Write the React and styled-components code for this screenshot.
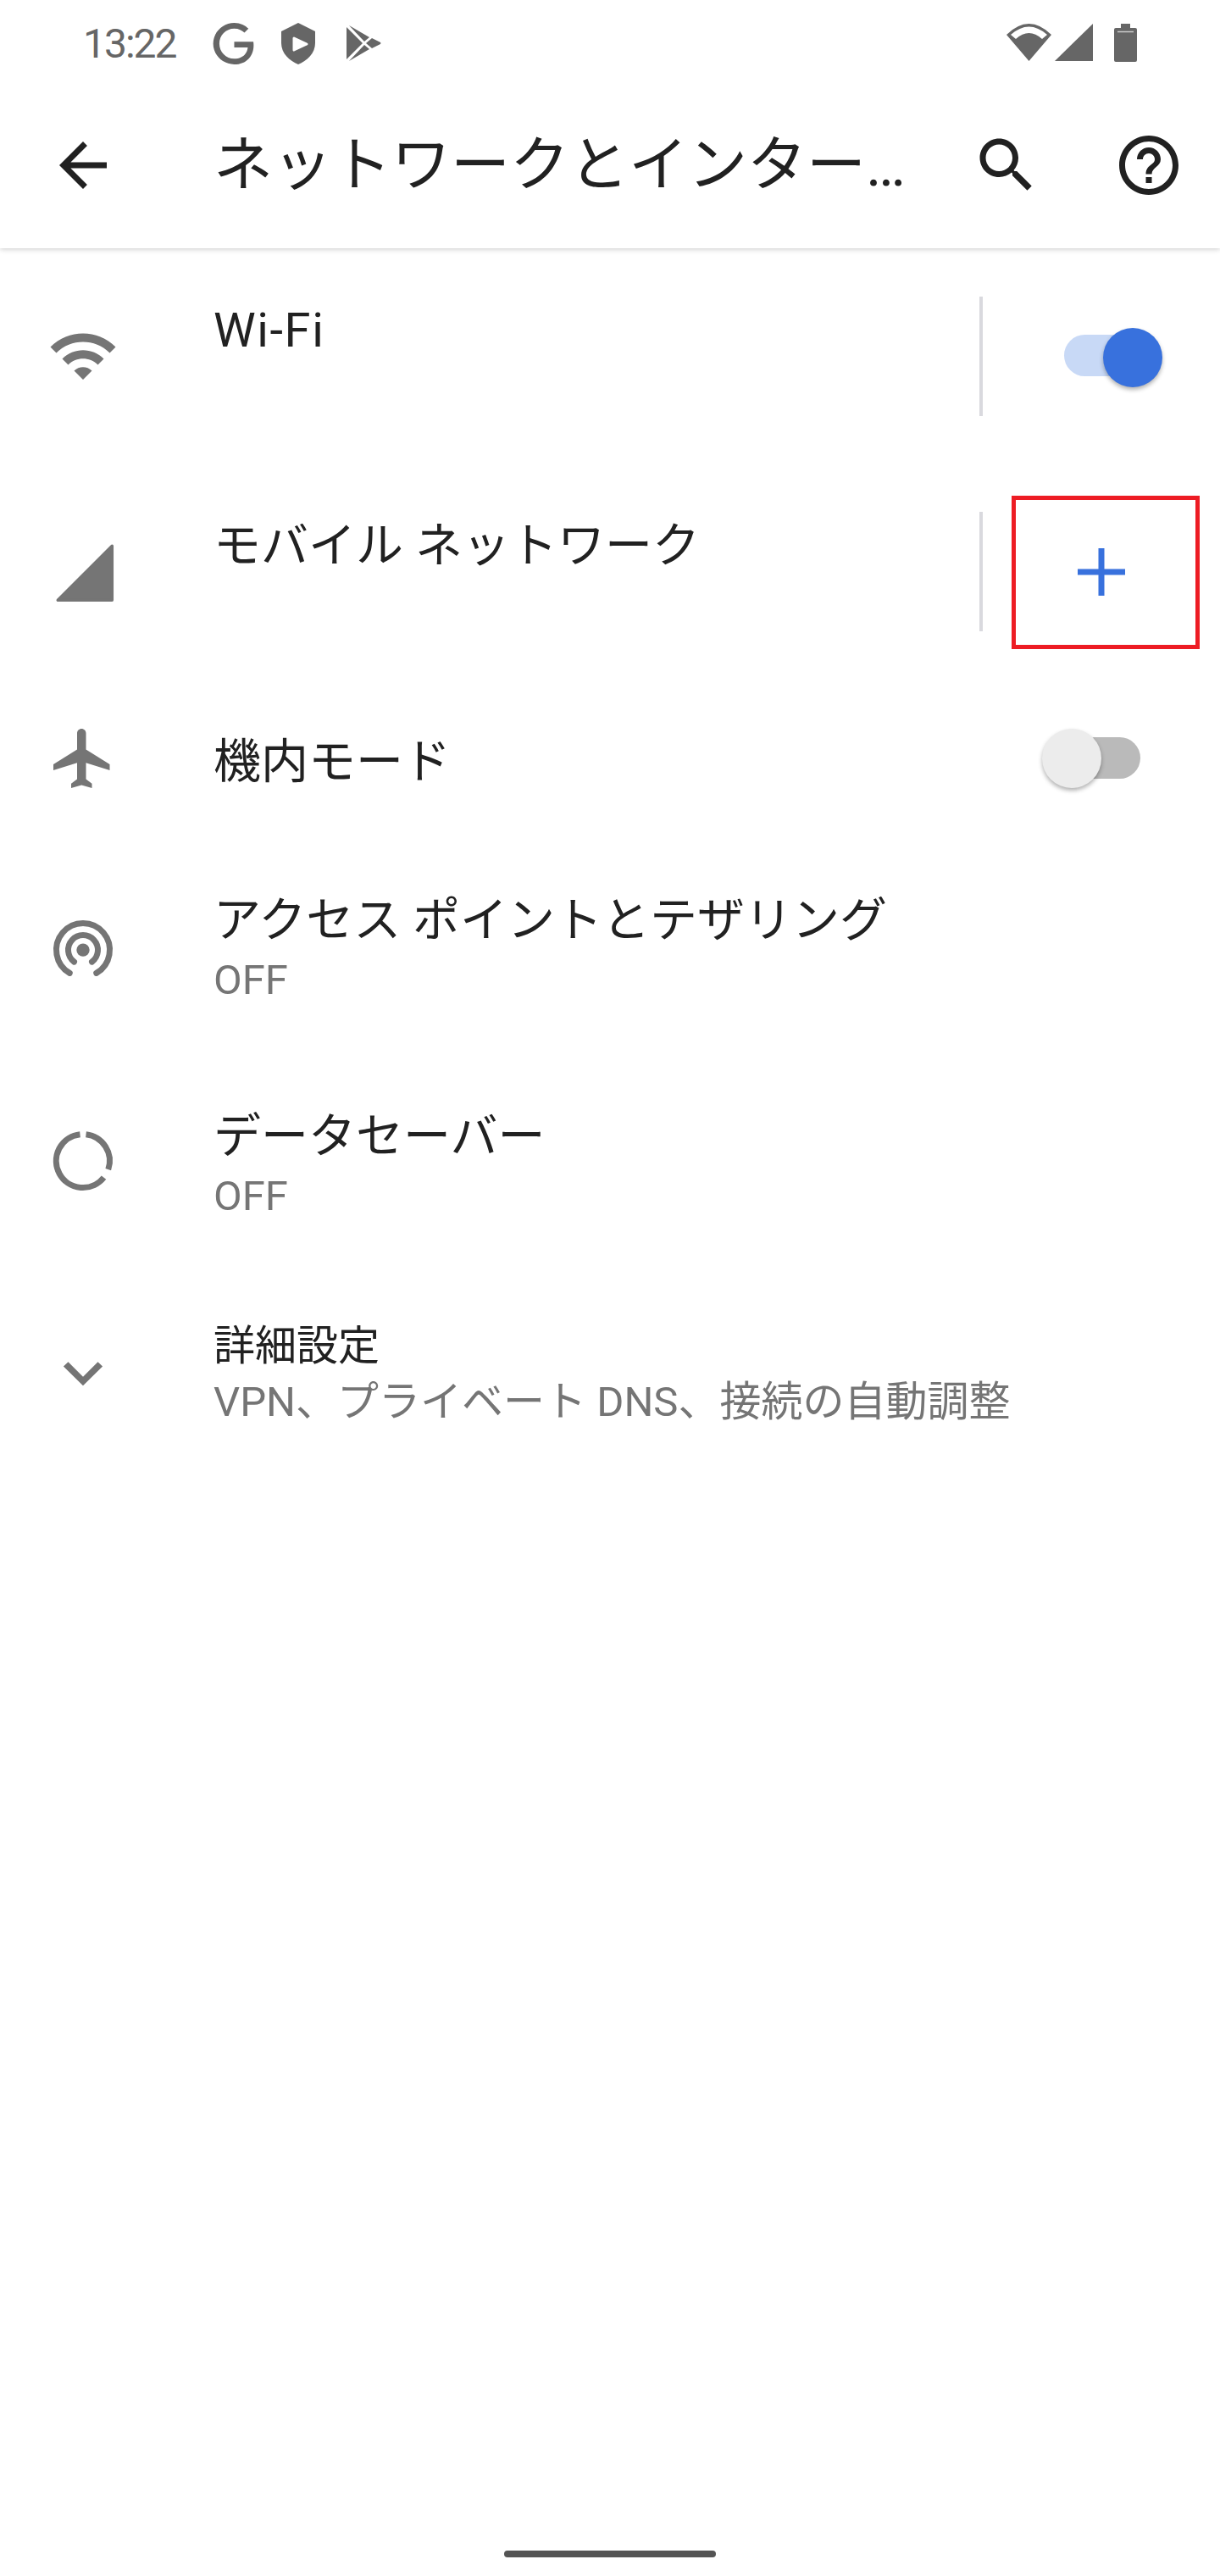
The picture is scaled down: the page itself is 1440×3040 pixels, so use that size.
import styled, { createGlobalStyle } from "styled-components"

const GlobalStyle = createGlobalStyle`
  html, body {
    margin: 0;
    padding: 0;
    background: #fff;
  }

  body {
    font-family: Roboto, "Noto Sans CJK JP", sans-serif;
  }
`

const Page = styled.div`
  width: 1440px;
  height: 3040px;
  display: flex;
  flex-direction: column;
  overflow: hidden;
  background: #fff;
`

const Header = styled.header`
  height: 293px;
  flex-shrink: 0;
  display: flex;
  flex-direction: column;
  box-shadow: 0 1px 6px rgba(0, 0, 0, 0.22);
`

const StatusBar = styled.div`
  height: 96px;
  display: flex;
  align-items: flex-start;
  color: #666;
`

const Time = styled.span`
  margin: 23px 0 0 98px;
  width: 153px;
  font-size: 48px;
  line-height: 58px;
  letter-spacing: -2px;
`

const StatusGlyph = styled.svg`
  display: block;
  fill: #666;
  margin-top: ${(p) => p.$top}px;
  margin-left: ${(p) => p.$left}px;
`

const Toolbar = styled.div`
  flex: 1;
  display: flex;
  align-items: center;
  padding-left: 56px;
`

const Title = styled.h1`
  margin: 0 0 0 112px;
  width: 830px;
  font-size: 70px;
  font-weight: 400;
  line-height: 84px;
  color: #212121;
  white-space: nowrap;
`

const Icon = styled.svg`
  display: block;
  flex-shrink: 0;
  width: 84px;
  height: 84px;
  fill: ${(p) => p.$color || "#757575"};
`

const ToolbarIcon = styled(Icon)`
  margin-left: ${(p) => p.$left}px;
`

const List = styled.main`
  display: flex;
  flex-direction: column;
`

const Row = styled.div`
  height: ${(p) => p.$height}px;
  display: flex;
  align-items: center;
  padding-left: 56px;
`

const Body = styled.div`
  flex: 1;
  margin-left: 112px;
  padding-top: ${(p) => p.$drop || 0}px;
  display: flex;
  flex-direction: column;
`

const RowTitle = styled.div`
  font-size: ${(p) => p.$size || 56}px;
  line-height: ${(p) => p.$line || 72}px;
  letter-spacing: ${(p) => p.$tracking || 0}px;
  color: #212121;
  white-space: nowrap;
`

const Summary = styled.div`
  font-size: 49px;
  line-height: ${(p) => p.$line || 70}px;
  min-height: ${(p) => p.$line || 64}px;
  color: #757575;
  white-space: nowrap;
`

const Trailing = styled.div`
  width: 284px;
  flex-shrink: 0;
  display: flex;
  align-items: center;
`

const Divider = styled.div`
  width: 4px;
  height: 141px;
  background: #d9d9de;
`

const Switch = styled.div`
  position: relative;
  width: 142px;
  height: 70px;
  margin-left: auto;
  margin-right: 68px;
`

const Track = styled.div`
  position: absolute;
  top: 10px;
  left: ${(p) => (p.$on ? 26 : 18)}px;
  width: 98px;
  height: 49px;
  border-radius: 25px;
  background: ${(p) => (p.$on ? "#c8d9f6" : "#bababa")};
`

const Thumb = styled.div`
  position: absolute;
  top: ${(p) => (p.$on ? 2 : 0)}px;
  left: ${(p) => (p.$on ? 72 : 0)}px;
  width: 70px;
  height: 70px;
  border-radius: 50%;
  background: ${(p) => (p.$on ? "#3871dd" : "#ececec")};
  box-shadow: 0 3px 5px rgba(0, 0, 0, 0.3);
`

const AddButton = styled.div`
  box-sizing: border-box;
  width: 222px;
  height: 181px;
  margin: 2px 0 0 34px;
  padding-right: 10px;
  border: 5px solid #ed1c24;
  display: flex;
  align-items: center;
  justify-content: center;
`

const HomeBar = styled.div`
  width: 250px;
  height: 8px;
  margin: auto auto 22px;
  border-radius: 4px;
  background: #545454;
`

function Toggle({ on }) {
  return (
    <Switch>
      <Track $on={on} />
      <Thumb $on={on} />
    </Switch>
  )
}

export default function App() {
  return (
    <Page>
      <GlobalStyle />

      <Header>
        <StatusBar>
          <Time>13:22</Time>
          <StatusGlyph $top={27} $left={0} width="49" height="49" viewBox="0 0 24 24">
            <path d="M12.48 10.92v3.28h7.84c-.24 1.84-.853 3.187-1.787 4.133-1.147 1.147-2.933 2.4-6.053 2.4-4.827 0-8.6-3.893-8.6-8.72s3.773-8.72 8.6-8.72c2.6 0 4.507 1.027 5.907 2.347l2.307-2.307C18.747 1.44 16.133 0 12.48 0 5.867 0 .307 5.387.307 12s5.56 12 12.173 12c3.573 0 6.267-1.173 8.373-3.36 2.16-2.16 2.84-5.213 2.84-7.667 0-.76-.053-1.467-.16-2.053H12.48z" />
          </StatusGlyph>
          <StatusGlyph $top={27} $left={32} width="40" height="49" viewBox="0 0 40 49">
            <path d="M20 0L40 10V24C40 36 30 45 20 49C10 45 0 36 0 24V10Z" />
            <path d="M15 18L30 25L15 32Z" fill="#fff" stroke="#fff" strokeWidth="3" strokeLinejoin="round" />
          </StatusGlyph>
          <StatusGlyph $top={29} $left={37} width="41" height="44" viewBox="0 0 41 44">
            <path d="M0 3L19 22L0 41Z" />
            <path d="M3 1L27 15L21 20Z" />
            <path d="M3 43L27 29L21 24Z" />
            <path d="M30 16L40 21Q41 22 40 23L30 28L23 22Z" />
          </StatusGlyph>
          <StatusGlyph $top={28} $left={738} width="53" height="44" viewBox="0 0 53 44">
            <path d="M0 13Q26.5 -13 53 13L26.5 44Z" />
            <path d="M5 13Q26.5 -6 48 13L42 18Q26.5 4 11 18Z" fill="#fff" />
          </StatusGlyph>
          <StatusGlyph $top={28} $left={4} width="45" height="44" viewBox="0 0 45 44">
            <path d="M0 44H45V0Z" />
          </StatusGlyph>
          <StatusGlyph $top={28} $left={25} width="27" height="45" viewBox="0 0 27 45">
            <path d="M8 0H19V5H25Q27 5 27 7V43Q27 45 25 45H2Q0 45 0 43V7Q0 5 2 5H8Z" />
            <path d="M4 9.5H23" stroke="#ccc" strokeWidth="1.5" />
          </StatusGlyph>
        </StatusBar>

        <Toolbar>
          <Icon $color="#212121" viewBox="0 0 24 24">
            <path d="M20 11H7.83l5.59-5.59L12 4l-8 8 8 8 1.41-1.41L7.83 13H20v-2z" />
          </Icon>
          <Title>ネットワークとインター…</Title>
          <ToolbarIcon $left={64} $color="#212121" viewBox="0 0 24 24">
            <path d="M15.5 14h-.79l-.28-.27C15.41 12.59 16 11.11 16 9.5 16 5.91 13.09 3 9.5 3S3 5.91 3 9.5 5.91 16 9.5 16c1.61 0 3.09-.59 4.23-1.57l.27.28v.79l5 4.99L20.49 19l-4.99-5zm-6 0C7.01 14 5 11.99 5 9.5S7.01 5 9.5 5 14 7.01 14 9.5 11.99 14 9.5 14z" />
          </ToolbarIcon>
          <ToolbarIcon $left={84} $color="#212121" viewBox="0 0 24 24">
            <path d="M11 18h2v-2h-2v2zm1-16C6.48 2 2 6.48 2 12s4.48 10 10 10 10-4.48 10-10S17.52 2 12 2zm0 18c-4.41 0-8-3.59-8-8s3.59-8 8-8 8 3.59 8 8-3.59 8-8 8zm0-14c-2.21 0-4 1.79-4 4h2c0-1.1.9-2 2-2s2 .9 2 2c0 2-3 1.75-3 5h2c0-2.25 3-2.5 3-5 0-2.21-1.79-4-4-4z" />
          </ToolbarIcon>
        </Toolbar>
      </Header>

      <List>
        <Row $height={254}>
          <Icon viewBox="0 0 24 24">
            <path d="M1 9l2 2c4.97-4.97 13.03-4.97 18 0l2-2C16.93 2.93 7.08 2.93 1 9zm8 8l3 3 3-3c-1.65-1.66-4.34-1.66-6 0zm-4-4l2 2c2.76-2.76 7.24-2.76 10 0l2-2C15.14 9.14 8.87 9.14 5 13z" />
          </Icon>
          <Body $drop={4}>
            <RowTitle $tracking={1.6}>Wi-Fi</RowTitle>
            <Summary />
          </Body>
          <Trailing>
            <Divider />
            <Toggle on />
          </Trailing>
        </Row>

        <Row $height={254}>
          <Icon viewBox="0 0 24 24">
            <path d="M3.5 21.8H21.8V3.5Z" stroke="#757575" strokeWidth="1" strokeLinejoin="round" />
          </Icon>
          <Body $drop={4}>
            <RowTitle>モバイル ネットワーク</RowTitle>
            <Summary />
          </Body>
          <Trailing>
            <Divider />
            <AddButton>
              <svg width="56" height="56" viewBox="0 0 56 56" fill="#3871dd">
                <path d="M24.5 0H31.5V24.5H56V31.5H31.5V56H24.5V31.5H0V24.5H24.5Z" />
              </svg>
            </AddButton>
          </Trailing>
        </Row>

        <Row $height={188}>
          <Icon viewBox="0 0 24 24">
            <path d="M21 16v-2l-8-5V3.5c0-.83-.67-1.5-1.5-1.5S10 2.67 10 3.5V9l-8 5v2l8-2.5V19l-2 1.5V22l3.5-1 3.5 1v-1.5L13 19v-5.5l8 2.5z" />
          </Icon>
          <Body $drop={8}>
            <RowTitle>機内モード</RowTitle>
          </Body>
          <Trailing>
            <Toggle />
          </Trailing>
        </Row>

        <Row $height={259}>
          <Icon viewBox="0 0 24 24">
            <circle cx="12" cy="12.6" r="2.2" />
            <path
              d="M7.5 20.4A9 9 0 1 1 16.5 20.4M9 16.6A5 5 0 1 1 15 16.6"
              fill="none"
              stroke="#757575"
              strokeWidth="2"
              strokeLinecap="round"
            />
          </Icon>
          <Body $drop={4}>
            <RowTitle>アクセス ポイントとテザリング</RowTitle>
            <Summary>OFF</Summary>
          </Body>
        </Row>

        <Row $height={244}>
          <Icon viewBox="0 0 24 24">
            <path
              d="M13 3.06A9 9 0 0 1 20.5 14.9M11 3.06A9 9 0 1 0 19 17.6"
              fill="none"
              stroke="#757575"
              strokeWidth="2"
            />
          </Icon>
          <Body $drop={12}>
            <RowTitle>データセーバー</RowTitle>
            <Summary>OFF</Summary>
          </Body>
        </Row>

        <Row $height={252}>
          <Icon viewBox="0 0 24 24">
            <path d="M7 8.9L5.4 10.4L12 16.9L18.6 10.4L17 8.9L12 13.9Z" />
          </Icon>
          <Body $drop={8}>
            <RowTitle $size={49} $line={66}>詳細設定</RowTitle>
            <Summary $line={66}>VPN、プライベート DNS、接続の自動調整</Summary>
          </Body>
        </Row>
      </List>

      <HomeBar />
    </Page>
  )
}
